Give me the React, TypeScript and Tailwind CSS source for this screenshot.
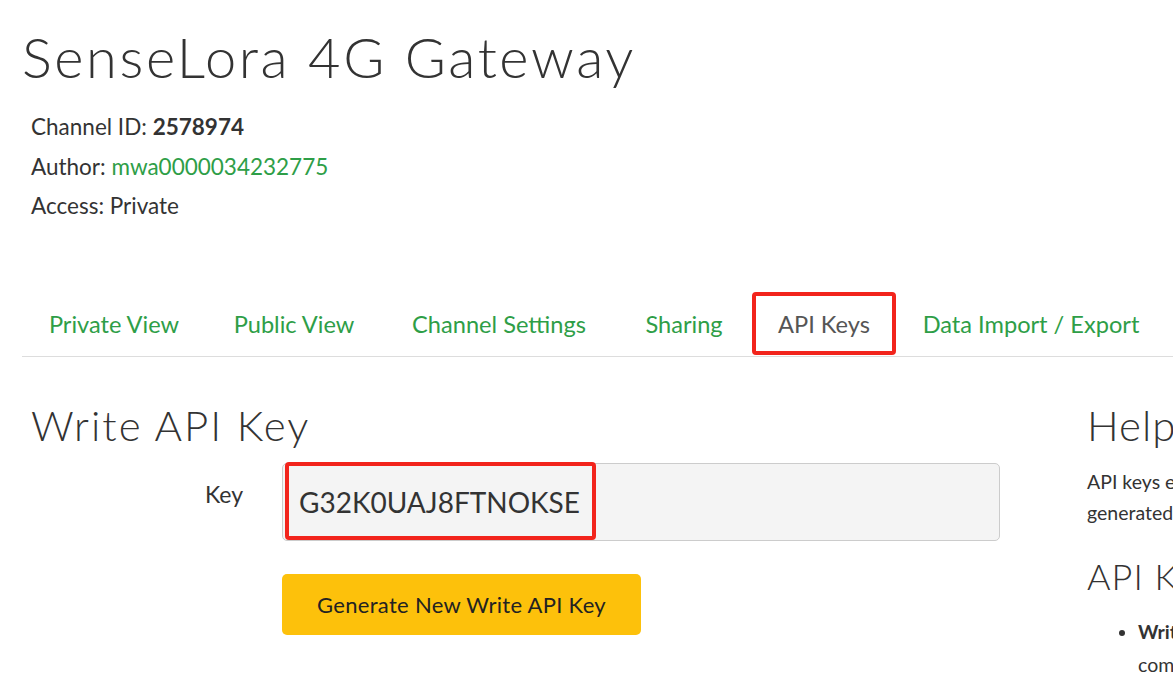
import React from 'react';

const tabs = [
  { label: 'Private View', w: 'w-[184px]' },
  { label: 'Public View', w: 'w-[176px]' },
  { label: 'Channel Settings', w: 'w-[234px]' },
  { label: 'Sharing', w: 'w-[136px]' },
  { label: 'API Keys', w: 'w-[144px]' },
  { label: 'Data Import / Export', w: 'w-[270px]' },
];

const body = { fontFamily: 'Lato, "Open Sans", sans-serif' };
const head = { fontFamily: 'Lato, "Noto Sans", sans-serif' };

export default function App() {
  return (
    <div className="w-[1173px] h-[675px] overflow-hidden bg-white text-[#333]" style={body}>
      <div className="pl-[22px]">
        <h1 className="pt-[22px] text-[56px] font-light leading-[70px] tracking-[2.6px] text-[#333]" style={head}>
          SenseLora 4G Gateway
        </h1>

        <div className="mt-[15px] pl-[9px] text-[22.5px] leading-[39.5px] text-[#333]">
          <div>
            Channel ID: <span className="font-bold">2578974</span>
          </div>
          <div>
            Author: <a className="text-[#2e9e47]">mwa0000034232775</a>
          </div>
          <div>Access: Private</div>
        </div>

        <ul className="mt-[67px] flex w-[1400px] border-b border-[#ddd] text-[23.6px]">
          {tabs.map((t) => {
            const active = t.label === 'API Keys';
            return (
              <li key={t.label} className={`relative shrink-0 ${t.w}`}>
                <a
                  className={`block whitespace-nowrap pt-[14px] pb-[14px] text-center leading-[35px] ${
                    active ? 'text-[#555]' : 'text-[#2e9e47]'
                  }`}
                >
                  {t.label}
                </a>
                {active && (
                  <span className="pointer-events-none absolute left-0 right-0 top-[-1px] bottom-[1px] rounded-[4px] border-[4px] border-[#f2241c]" />
                )}
              </li>
            );
          })}
        </ul>

        <div className="flex w-[2300px] pt-[46px]">
          <div className="w-[1065px] shrink-0 pl-[9px]">
            <h2 className="text-[42px] font-light leading-[44px] tracking-[2px]" style={head}>
              Write API Key
            </h2>

            <div className="mt-[16px] flex items-start">
              <label className="w-[251px] shrink-0 pt-[16px] pr-[39px] text-right text-[23px] leading-[30px]">Key</label>
              <div className="relative h-[78px] w-[718px] rounded-[5px] border border-[#ccc] bg-[#f4f4f4]">
                <span className="absolute left-[16px] top-[19px] text-[28px] leading-[38px] text-[#333]">
                  G32K0UAJ8FTNOKSE
                </span>
                <span className="pointer-events-none absolute left-[2px] top-[-2px] h-[78px] w-[311px] rounded-[4px] border-[4px] border-[#f2241c]" />
              </div>
            </div>

            <div className="mt-[33px] pl-[251px]">
              <button
                className="h-[61px] w-[359px] rounded-[5px] bg-[#fdc10b] text-[22px] tracking-[0.3px] text-[#222]"
                style={head}
              >
                Generate New Write API Key
              </button>
            </div>
          </div>

          <div className="w-[1200px] shrink-0 whitespace-nowrap">
            <h2 className="text-[42px] font-light leading-[44px] tracking-[1px]" style={head}>
              Help
            </h2>
            <p className="mt-[19px] text-[19.5px] leading-[31px]">
              API keys enable you to write data to a channel or read data from a private channel. API keys are auto-
              <br />
              generated when you create a new channel.
            </p>
            <h3 className="mt-[28px] text-[36px] font-light leading-[40px] tracking-[1px]" style={head}>
              API Keys Settings
            </h3>
            <ul className="mt-[19px] list-disc pl-[51px] text-[19.5px] leading-[33px]">
              <li>
                <span className="font-bold">Write API Key:</span> Use this key to write data to a channel. If you feel
                your key has been
                <br />
                compromised, click Generate New Write API Key.
              </li>
            </ul>
          </div>
        </div>
      </div>
    </div>
  );
}
